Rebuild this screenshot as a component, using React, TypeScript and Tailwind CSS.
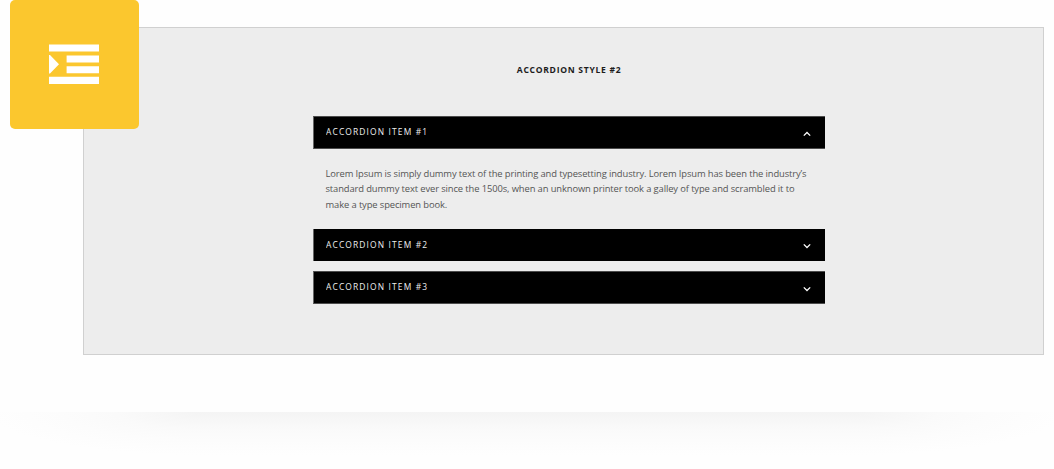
import { useState } from "react";

const items = [
  {
    title: "ACCORDION ITEM #1",
    bar: "h-[33px] border-y border-y-[#4c4c4c]",
    lines: [
      "Lorem Ipsum is simply dummy text of the printing and typesetting industry. Lorem Ipsum has been the industry’s",
      "standard dummy text ever since the 1500s, when an unknown printer took a galley of type and scrambled it to",
      "make a type specimen book.",
    ],
  },
  { title: "ACCORDION ITEM #2", bar: "h-8", lines: [] },
  { title: "ACCORDION ITEM #3", bar: "mt-[10px] h-[33px] border-y border-y-[#4c4c4c]", lines: [] },
];

function IndentIcon() {
  return (
    <svg width="50" height="40" viewBox="0 0 50 40" fill="#fff">
      <path d="M0 .4h50v7.2H0zM17.6 11.4H50v7.2H17.6zM17.6 22.3H50v6.9H17.6zM0 32.8h50V40H0zM0 11h1l9 9.3-9 9.2H0z" />
    </svg>
  );
}

function Chevron({ up }: { up: boolean }) {
  return (
    <svg width="8" height="6" viewBox="0 0 8 6" fill="none" stroke="#fff" strokeWidth="1.3">
      <path d={up ? "M.8 4.6 4 1.5l3.2 3.1" : "M.8 1.4 4 4.5l3.2-3.1"} />
    </svg>
  );
}

export default function App() {
  const [open, setOpen] = useState(0);
  return (
    <div className="relative h-[469px] w-full overflow-hidden bg-[#fefefe] pt-[27px] font-['Open_Sans',sans-serif]">
      <main className="ml-[83px] flex h-[328px] w-[961px] flex-col items-center border border-[#d0d0d0] bg-[#ededed] pl-[11px]">
        <h2 className="mt-[35px] h-[14px] scale-x-90 pl-px text-[9.5px] leading-[14px] font-bold tracking-[0.8px] whitespace-nowrap text-[#1c1c1c]">
          ACCORDION STYLE #2
        </h2>
        <div className="mt-[39px] w-[512px]">
          {items.map((item, i) => (
            <section key={item.title}>
              <button
                onClick={() => setOpen(open === i ? -1 : i)}
                className={`flex w-full items-center justify-between border-l border-l-[#666] bg-black pr-[14px] pl-3 text-[9.8px] font-medium tracking-[1.32px] text-[#eee] ${item.bar}`}
              >
                <span className="origin-left scale-x-[0.86]">{item.title}</span>
                <span className={open === i ? "pt-[3px]" : "pt-[2px]"}>
                  <Chevron up={open === i} />
                </span>
              </button>
              {open === i && item.lines.length > 0 && (
                <div className="h-[80px] pt-[16.5px] pl-[12.5px] text-[9.4px] leading-[15.5px] tracking-[-0.11px] whitespace-nowrap text-[#555]">
                  {item.lines.map((line) => (
                    <p key={line}>{line}</p>
                  ))}
                </div>
              )}
            </section>
          ))}
        </div>
      </main>
      <div className="mt-[57px] flex h-[57px]">
        <div className="w-[200px] bg-[radial-gradient(ellipse_210px_43px_at_100%_0,#f4f4f4,#fafafa_40%,#fcfcfc_65%,#fefefe)]" />
        <div className="flex-1 bg-[linear-gradient(#f4f4f4,#fafafa_17px,#fcfcfc_28px,#fefefe_43px)]" />
        <div className="w-[200px] bg-[radial-gradient(ellipse_210px_43px_at_0_0,#f4f4f4,#fafafa_40%,#fcfcfc_65%,#fefefe)]" />
      </div>
      <div className="absolute top-0 left-[10px] flex h-[129px] w-[129px] items-center justify-center rounded-[5px] bg-[#fbc72e] pr-px pb-px">
        <IndentIcon />
      </div>
    </div>
  );
}
